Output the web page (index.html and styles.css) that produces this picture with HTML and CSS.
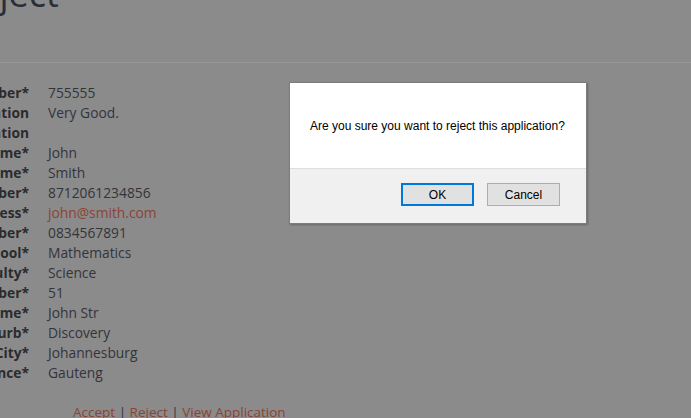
FILE: index.html
```html
<!DOCTYPE html>
<html>
<head>
<meta charset="utf-8">
<link rel="stylesheet" href="styles.css">
</head>
<body>
<div class="page">
  <h1 class="title">Reject</h1>
  <hr class="rule">
  <div class="details">
    <div class="lbl"><span>Reference Number*</span></div><div class="val">755555</div>
    <div class="lbl"><span>Recommendation</span></div><div class="val">Very Good.</div>
    <div class="lbl"><span>Qualification</span></div><div class="val"></div>
    <div class="lbl"><span>Name*</span></div><div class="val">John</div>
    <div class="lbl"><span>Surname*</span></div><div class="val">Smith</div>
    <div class="lbl"><span>ID Number*</span></div><div class="val">8712061234856</div>
    <div class="lbl"><span>Email Address*</span></div><div class="val"><a class="link">john@smith.com</a></div>
    <div class="lbl"><span>Contact Number*</span></div><div class="val">0834567891</div>
    <div class="lbl"><span>School*</span></div><div class="val">Mathematics</div>
    <div class="lbl"><span>Faculty*</span></div><div class="val">Science</div>
    <div class="lbl"><span>Street Number*</span></div><div class="val">51</div>
    <div class="lbl"><span>Street Name*</span></div><div class="val">John Str</div>
    <div class="lbl"><span>Suburb*</span></div><div class="val">Discovery</div>
    <div class="lbl"><span>City*</span></div><div class="val">Johannesburg</div>
    <div class="lbl"><span>Province*</span></div><div class="val">Gauteng</div>
  </div>
  <div class="actions"><a class="link">Accept</a> | <a class="link">Reject</a> | <a class="link">View Application</a></div>
</div>
<div class="dialog">
  <div class="dialog-body">Are you sure you want to reject this application?</div>
  <div class="dialog-foot">
    <button class="btn btn-ok">OK</button>
    <button class="btn">Cancel</button>
  </div>
</div>
</body>
</html>
```
FILE: styles.css
```css
html, body {
  margin: 0;
  padding: 0;
}
body {
  width: 691px;
  height: 418px;
  overflow: hidden;
  background: #8b8b8b;
  font-family: "Open Sans", "DejaVu Sans", sans-serif;
  font-size: 13.8px;
  color: #33343a;
  position: relative;
}
.page {
  display: flex;
  flex-direction: column;
}
.title {
  margin: -28px 0 0 -43px;
  font-weight: 400;
  font-size: 36px;
  line-height: 44px;
  color: #2a2e38;
  height: 44px;
}
.rule {
  margin: 46px 0 0 0;
  border: 0;
  border-top: 1px solid #969696;
  height: 0;
}
.details {
  margin-top: 20px;
  display: grid;
  grid-template-columns: 29px 1fr;
  column-gap: 19px;
  grid-auto-rows: 20px;
  line-height: 20px;
}
.lbl {
  display: flex;
  justify-content: flex-end;
  white-space: nowrap;
  font-weight: 700;
  color: #2b2b2e;
}
.val {
  white-space: nowrap;
}
.link {
  color: #8a4334;
}
.actions {
  margin-top: 19px;
  padding-left: 73px;
  line-height: 20px;
  font-size: 13.5px;
  color: #2d3240;
}
.dialog {
  position: absolute;
  left: 289px;
  top: 82px;
  width: 296px;
  height: 140px;
  border: 1px solid #7d7d7d;
  background: #f0f0f0;
  box-shadow: 1px 1px 2px rgba(0,0,0,0.25);
  display: flex;
  flex-direction: column;
}
.dialog-body {
  height: 85px;
  background: #ffffff;
  border-bottom: 1px solid #dfdfdf;
  font-family: "Liberation Sans", Arial, sans-serif;
  font-size: 12px;
  color: #000;
  display: flex;
  align-items: center;
  padding-left: 20px;
}
.dialog-foot {
  flex: 1;
  display: flex;
  justify-content: flex-end;
  align-items: flex-start;
  gap: 13px;
  padding: 14px 26px 0 0;
}
.btn {
  width: 73px;
  height: 23px;
  margin: 0;
  padding: 0;
  background: #e1e1e1;
  border: 1px solid #adadad;
  font-family: "Liberation Sans", Arial, sans-serif;
  font-size: 12px;
  color: #000;
}
.btn-ok {
  border: 2px solid #0078d7;
}
```
